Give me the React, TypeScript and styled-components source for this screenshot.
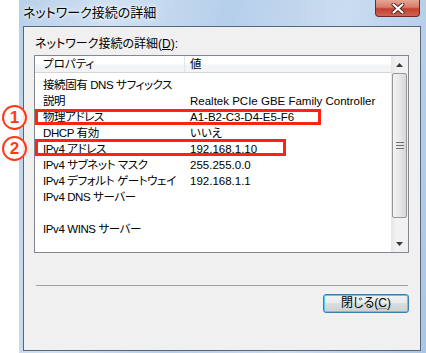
import styled, { createGlobalStyle } from "styled-components";

const GlobalStyle = createGlobalStyle`
  html, body {
    margin: 0;
    padding: 0;
    background: #ffffff;
  }
  body {
    font-family: "Liberation Sans", "Noto Sans CJK JP", sans-serif;
    font-size: 12px;
    font-feature-settings: "palt";
    color: #000;
  }
`;

const Page = styled.div`
  position: relative;
  width: 426px;
  height: 353px;
  overflow: hidden;
`;

const Window = styled.div`
  margin-left: 19px;
  width: 407px;
  height: 353px;
  box-sizing: border-box;
  padding: 0 5px 2px 4px;
  display: flex;
  flex-direction: column;
  background: linear-gradient(
    100deg,
    #b8d0ea 0%,
    #d0e1f3 20%,
    #b6cfea 45%,
    #cadcf0 70%,
    #a9c6e6 100%
  );
`;

const TitleBar = styled.div`
  height: 26px;
  display: flex;
  align-items: flex-start;
`;

const Title = styled.div`
  font-size: 13px;
  line-height: 16px;
  padding-top: 5px;
  color: #000;
  text-shadow: 0 0 6px #ffffff, 0 0 3px #ffffff;
`;

const CloseButton = styled.div`
  margin-left: auto;
  margin-right: 1px;
  width: 45px;
  height: 17px;
  box-sizing: border-box;
  border: 1px solid #6b2a26;
  border-top: none;
  border-radius: 0 0 4px 4px;
  background: linear-gradient(
    180deg,
    #e8a593 0%,
    #d77c6b 45%,
    #c4402f 55%,
    #cf6456 100%
  );
  display: flex;
  align-items: center;
  justify-content: center;
`;

const Client = styled.div`
  flex: 1;
  border: 1px solid #55677b;
  background: #f0f0f0;
  padding: 10px 11px 0 10px;
  display: flex;
  flex-direction: column;
`;

const GroupLabel = styled.div`
  line-height: 14px;
  padding-left: 1px;

  u {
    text-decoration: underline;
  }
`;

const ListBox = styled.div`
  margin-top: 4px;
  height: 198px;
  box-sizing: border-box;
  border: 1px solid #828790;
  background: #ffffff;
  display: flex;
`;

const ListContent = styled.div`
  flex: 1;
  display: flex;
  flex-direction: column;
  font-size: 11.5px;
`;

const HeaderRow = styled.div`
  height: 17px;
  display: flex;
  box-sizing: border-box;
  border-bottom: 1px solid #d5d5d5;
  background: linear-gradient(180deg, #ffffff 0%, #ffffff 50%, #f4f5f7 55%, #f2f3f5 100%);
`;

const HeaderCell = styled.div<{ $width?: number }>`
  ${(p) => (p.$width ? `width: ${p.$width}px;` : "flex: 1;")}
  box-sizing: border-box;
  padding-left: ${(p) => (p.$width ? 8 : 5)}px;
  line-height: 16px;
  border-right: ${(p) => (p.$width ? "1px solid #e3e4e6" : "none")};
`;

const Rows = styled.div`
  padding-top: 4px;
`;

const Row = styled.div`
  height: 16px;
  display: flex;
  line-height: 16px;
  white-space: nowrap;
`;

const Cell = styled.div<{ $width?: number }>`
  ${(p) => (p.$width ? `width: ${p.$width}px;` : "flex: 1;")}
  padding-left: ${(p) => (p.$width ? 8 : 5)}px;
  letter-spacing: ${(p) => (p.$width ? "-0.4px" : "0")};
  box-sizing: border-box;
`;

const ScrollBar = styled.div`
  width: 17px;
  display: flex;
  flex-direction: column;
  background: linear-gradient(90deg, #e6e6e6 0%, #f2f2f2 30%, #f0f0f0 100%);
`;

const ArrowButton = styled.div`
  height: 17px;
  display: flex;
  align-items: center;
  justify-content: center;
`;

const Thumb = styled.div`
  height: 145px;
  margin: 0 1px;
  box-sizing: border-box;
  border: 1px solid #979797;
  border-radius: 2px;
  background: linear-gradient(90deg, #f3f3f3 0%, #e8e8e8 50%, #d6d6d6 100%);
  display: flex;
  align-items: center;
  justify-content: center;
`;

const Track = styled.div`
  flex: 1;
`;

const Separator = styled.div`
  margin: 32px 1px 0 2px;
  height: 1px;
  background: #a0a0a0;
`;

const ButtonRow = styled.div`
  margin-top: 8px;
  display: flex;
  justify-content: flex-end;
`;

const DialogButton = styled.div`
  width: 86px;
  height: 19px;
  box-sizing: border-box;
  border: 1px solid #3c7fb1;
  border-radius: 3px;
  box-shadow: inset 0 0 0 1px #48d0f8;
  background: linear-gradient(180deg, #f2f2f2 0%, #ebebeb 45%, #dddddd 50%, #cfcfcf 100%);
  text-align: center;
  line-height: 17px;

  u {
    text-decoration: underline;
    text-decoration-color: #999;
  }
`;

const Highlight = styled.div<{ $left: number; $top: number; $w: number; $h: number }>`
  position: absolute;
  left: ${(p) => p.$left}px;
  top: ${(p) => p.$top}px;
  width: ${(p) => p.$w}px;
  height: ${(p) => p.$h}px;
  box-sizing: border-box;
  border: 3px solid #ff2411;
`;

// circled number annotation
const Marker = styled.div<{ $top: number }>`
  position: absolute;
  left: 2px;
  top: ${(p) => p.$top}px;
  width: 25px;
  height: 25px;
  box-sizing: border-box;
  border: 2.5px solid #ff3a14;
  border-radius: 50%;
  background: rgba(255, 255, 255, 0.85);
  display: flex;
  align-items: center;
  justify-content: center;
  font-family: "Liberation Sans", sans-serif;
  font-size: 17px;
  font-weight: 700;
  line-height: 18px;
  color: #ff3a14;
`;

const rows: [string, string][] = [
  ["接続固有 DNS サフィックス", ""],
  ["説明", "Realtek PCIe GBE Family Controller"],
  ["物理アドレス", "A1-B2-C3-D4-E5-F6"],
  ["DHCP 有効", "いいえ"],
  ["IPv4 アドレス", "192.168.1.10"],
  ["IPv4 サブネット マスク", "255.255.0.0"],
  ["IPv4 デフォルト ゲートウェイ", "192.168.1.1"],
  ["IPv4 DNS サーバー", ""],
  ["", ""],
  ["IPv4 WINS サーバー", ""],
];

const CloseIcon = () => (
  <svg width="14" height="11" viewBox="0 0 14 11">
    <path d="M2.5 1.5 L11.5 9.5 M11.5 1.5 L2.5 9.5" stroke="#4a2320" strokeWidth="4" strokeLinecap="round" />
    <path d="M2.5 1.5 L11.5 9.5 M11.5 1.5 L2.5 9.5" stroke="#ffffff" strokeWidth="2.2" strokeLinecap="round" />
  </svg>
);

const Triangle = ({ up }: { up?: boolean }) => (
  <svg width="7" height="4" viewBox="0 0 7 4">
    <path d={up ? "M0 4 L3.5 0 L7 4 Z" : "M0 0 L7 0 L3.5 4 Z"} fill="#3a3a3a" />
  </svg>
);

const Gripper = () => (
  <svg width="8" height="7" viewBox="0 0 8 7">
    <path d="M0 0.5 H8 M0 3.5 H8 M0 6.5 H8" stroke="#6f6f6f" strokeWidth="1" />
  </svg>
);

export default function App() {
  return (
    <>
      <GlobalStyle />
      <Page>
        <Window>
          <TitleBar>
            <Title>ネットワーク接続の詳細</Title>
            <CloseButton>
              <CloseIcon />
            </CloseButton>
          </TitleBar>
          <Client>
            <GroupLabel>
              ネットワーク接続の詳細(<u>D</u>):
            </GroupLabel>
            <ListBox>
              <ListContent>
                <HeaderRow>
                  <HeaderCell $width={150}>プロパティ</HeaderCell>
                  <HeaderCell>値</HeaderCell>
                </HeaderRow>
                <Rows>
                  {rows.map(([name, value], i) => (
                    <Row key={`row-${i}`}>
                      <Cell $width={150}>{name}</Cell>
                      <Cell>{value}</Cell>
                    </Row>
                  ))}
                </Rows>
              </ListContent>
              <ScrollBar>
                <ArrowButton>
                  <Triangle up />
                </ArrowButton>
                <Thumb>
                  <Gripper />
                </Thumb>
                <Track />
                <ArrowButton>
                  <Triangle />
                </ArrowButton>
              </ScrollBar>
            </ListBox>
            <Separator />
            <ButtonRow>
              <DialogButton>
                閉じる(<u>C</u>)
              </DialogButton>
            </ButtonRow>
          </Client>
        </Window>
        <Highlight $left={35} $top={109} $w={286} $h={16} />
        <Highlight $left={35} $top={139} $w={251} $h={17} />
        <Marker $top={105}>1</Marker>
        <Marker $top={136}>2</Marker>
      </Page>
    </>
  );
}
